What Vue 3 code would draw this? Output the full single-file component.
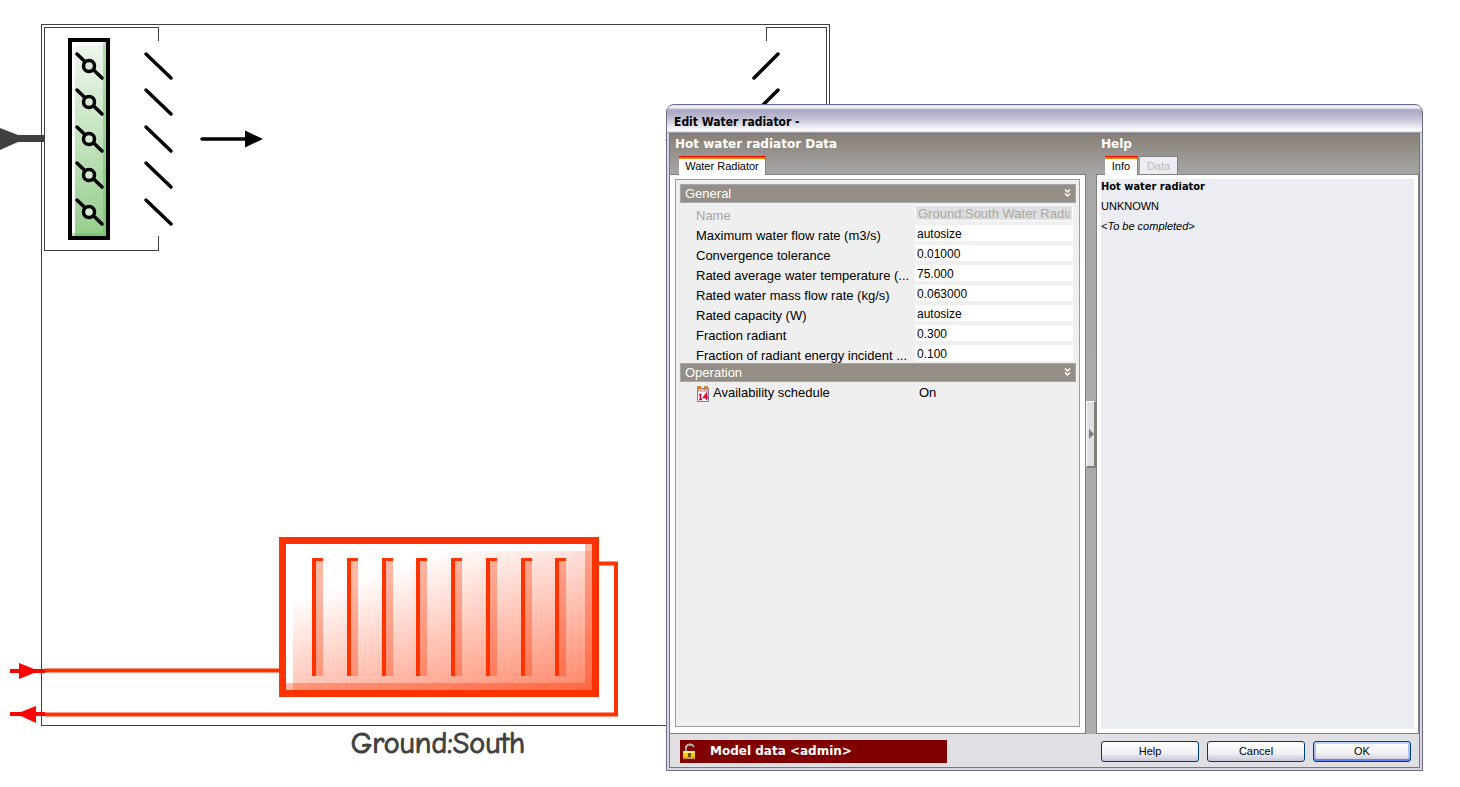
<script setup>
import { ref } from 'vue'

const centres = [66, 102, 139, 175, 212]
const fins = [312, 347, 382, 416, 451, 486, 521, 555]

const fields = ref([
  { id: 'name', label: 'Name', value: 'Ground:South Water Radiator', disabled: true },
  { id: 'flow', label: 'Maximum water flow rate (m3/s)', value: 'autosize' },
  { id: 'tolerance', label: 'Convergence tolerance', value: '0.01000' },
  { id: 'temperature', label: 'Rated average water temperature (...', value: '75.000' },
  { id: 'mass', label: 'Rated water mass flow rate (kg/s)', value: '0.063000' },
  { id: 'capacity', label: 'Rated capacity (W)', value: 'autosize' },
  { id: 'radiant', label: 'Fraction radiant', value: '0.300' },
  { id: 'incident', label: 'Fraction of radiant energy incident ...', value: '0.100' }
])
</script>

<template>
  <main class="workspace">
    <svg class="diagram" width="860" height="770" viewBox="0 0 860 770" role="img" aria-label="Zone diagram">
      <defs>
        <linearGradient id="green" gradientUnits="userSpaceOnUse" x1="75" y1="45" x2="105" y2="236">
          <stop offset="0" stop-color="#f0f7ef" />
          <stop offset="1" stop-color="#93ce8a" />
        </linearGradient>
        <linearGradient id="heat" gradientUnits="userSpaceOnUse" x1="293" y1="600" x2="350" y2="771">
          <stop offset="0" stop-color="#ff3300" stop-opacity="0" />
          <stop offset="1" stop-color="#ff3300" stop-opacity="0.6" />
        </linearGradient>
      </defs>
      <g fill="none" stroke="#404040" shape-rendering="crispEdges">
        <rect x="41.5" y="24.5" width="788" height="701" />
        <path d="M158.500 41V27.500H44.500V250.500H158.500V236M766.500 41V27.500H826.500V250" />
      </g>
      <path d="M0 128 18 135H45V142H18L0 150Z" fill="#404040" />

      <rect x="70" y="40" width="38" height="198" fill="#fff" stroke="#000" stroke-width="4" />
      <rect x="75" y="45" width="31" height="191" fill="url(#green)" />
      <path d="M103 42h3v191h-3zM72 233h34v3H72z" fill="#59b64e" fill-opacity="0.4" />
      <g fill="none" stroke="#000" stroke-width="3.500" stroke-linecap="round">
        <g v-for="y in centres" :key="y">
          <path :d="`M77 ${y - 12}L102 ${y + 12}`" />
          <circle cx="89" :cy="y" r="5.500" fill="#d5ebd2" />
          <path :d="`M146 ${y - 12}L171 ${y + 12}`" />
        </g>
        <path d="M778 54 754 78M778 90 754 114M202 139H246" />
      </g>
      <path d="M245 130.500 263 139 245 147.500Z" />
      <path d="M669 137 665 140 669 142Z" fill="#777" />

      <rect x="282.500" y="540.500" width="313" height="153" fill="#fff" stroke="#ff3300" stroke-width="7" />
      <path d="M293 551H592V690H293Z" fill="url(#heat)" />
      <path d="M585 544h7v146h-7zM286 683h306v7H286z" fill="#ff3300" fill-opacity="0.35" />
      <g v-for="x in fins" :key="x" fill="#ff3300">
        <rect :x="x + 4" y="561" width="7" height="115" fill-opacity="0.35" />
        <path :d="`M${x} 558h11v3h-7v115h-4z`" />
      </g>
      <path d="M45 670.500H280M599 563.500H616V714.500H45" fill="none" stroke="#ff3300" stroke-width="4" />
      <path d="M10 669H19V663L34 669H45V673H34L19 679V673H10ZM10 712H21L36 706V712H45V716H36V723L21 716H10Z" fill="#f00" />
      <text class="zone-name" x="438" y="753" text-anchor="middle">Ground:South</text>
    </svg>

    <section class="dialog" role="dialog" aria-labelledby="dialog-title">
      <h1 id="dialog-title">Edit Water radiator -</h1>
      <div class="body">
        <section class="pane data">
          <h2>Hot water radiator Data</h2>
          <div class="tabs"><button class="tab active" type="button">Water Radiator</button></div>
          <div class="sheet">
            <div class="properties">
              <button class="group" type="button">General
                <svg width="7" height="9" viewBox="0 0 7 9"><path d="M1 0.500 3.500 3 6 0.500M1 4.500 3.500 7 6 4.500" fill="none" stroke="#fff" stroke-width="1.500" /></svg>
              </button>
              <div v-for="f in fields" :key="f.id" class="row" :class="{ disabled: f.disabled }">
                <label :for="f.id">{{ f.label }}</label>
                <input :id="f.id" v-model="f.value" type="text" :disabled="f.disabled">
              </div>
              <button class="group" type="button">Operation
                <svg width="7" height="9" viewBox="0 0 7 9"><path d="M1 0.500 3.500 3 6 0.500M1 4.500 3.500 7 6 4.500" fill="none" stroke="#fff" stroke-width="1.500" /></svg>
              </button>
              <div class="row schedule">
                <svg width="14" height="17" viewBox="0 0 14 17" aria-hidden="true">
                  <path d="M1.500 3.500h11v13h-11z" fill="#fff" stroke="#7878b0" />
                  <path d="M2 4h10v3H2z" fill="#e9b3ae" />
                  <path d="M2 5V2h2l1 2M9 5V2h2l1 2" fill="none" stroke="#c98535" stroke-width="2" />
                  <path d="M3 9.500H4.500V14M3 14.500h3M10.500 15V8.500L7.500 12.500H12" fill="none" stroke="#e0002d" stroke-width="1.500" />
                </svg>
                <label for="availability">Availability schedule</label>
                <input id="availability" type="text" value="On">
              </div>
            </div>
          </div>
        </section>
        <div class="divider">
          <button type="button" aria-label="Collapse help">
            <svg width="5" height="10" viewBox="0 0 5 10"><path d="M0 0 5 5 0 10Z" fill="#808080" /></svg>
          </button>
        </div>
        <section class="pane help">
          <h2>Help</h2>
          <div class="tabs">
            <button class="tab active" type="button">Info</button>
            <button class="tab" type="button" disabled>Data</button>
          </div>
          <div class="sheet">
            <div class="info">
              <h3>Hot water radiator</h3>
              <p>UNKNOWN</p>
              <p><em>&lt;To be completed&gt;</em></p>
            </div>
          </div>
        </section>
      </div>
      <footer>
        <div class="status">
          <svg width="14" height="17" viewBox="0 0 14 17" aria-hidden="true">
            <path d="M4 9V4l2-2h4l2 2" fill="none" stroke="#999" stroke-width="2" />
            <path d="M4 5V3l2-2h4l2 2" fill="none" stroke="#ddd" stroke-dasharray="2 1" />
            <path d="M1 8h12v8H1z" fill="#f5c518" />
            <path d="M1 8h12v2H1z" fill="#ffef70" />
            <path d="M1 14h12v2H1z" fill="#d99b10" />
            <path d="M6 10h3v4H6z" fill="#6b5212" />
          </svg>
          <span>Model data &lt;admin&gt;</span>
        </div>
        <div class="actions">
          <button type="button">Help</button>
          <button type="button">Cancel</button>
          <button type="button" class="default">OK</button>
        </div>
      </footer>
    </section>
  </main>
</template>

<style>
body { margin: 0; background: #fff; }
</style>

<style scoped>
* { box-sizing: border-box; }
.workspace {
  position: relative;
  min-height: 100vh;
  overflow: hidden;
  color: #000;
  font-family: "Liberation Sans", Arial, sans-serif;
  font-size: 13px;
}
.diagram { display: block; }
.zone-name {
  fill: #404040;
  stroke: #404040;
  stroke-width: 1px;
  font-family: "Comic Sans MS", "Comic Neue", Lato, sans-serif;
  font-size: 30px;
}
button, input { margin: 0; padding: 0; border: 0; border-radius: 0; font: inherit; color: inherit; }
h1, h2, h3, p { margin: 0; }
.dialog {
  position: absolute;
  top: 104px;
  right: 37px;
  bottom: 16px;
  left: 666px;
  display: flex;
  flex-direction: column;
  padding: 0 2px 2px;
  border: 1px solid #6b6b88;
  border-radius: 8px 8px 0 0;
  background: #d8d8e4;
  overflow: hidden;
}
h1 {
  height: 28px;
  margin: 0 -2px;
  padding-left: 7px;
  background: linear-gradient(#d0d0e0 0, #fff 2px, #a8a6c4 5px, #c0bfd2 13px, #fff 26px, #8886a0 28px);
  font: bold 12px/34px "DejaVu Sans Condensed", "DejaVu Sans", sans-serif;
}
.body {
  flex: 1;
  display: flex;
  min-height: 0;
  border: 1px solid #76748c;
  border-bottom: 0;
  background: linear-gradient(#888078 0, #a8a8a8 42px, #adadad 100%);
}
.pane { display: flex; flex-direction: column; min-width: 0; }
.data { flex: 416 1 0; }
.help { flex: 323 1 0; }
h2 {
  height: 22px;
  padding-left: 5px;
  color: #fff;
  font: bold 12px/20px "DejaVu Sans", sans-serif;
}
.tabs { display: flex; gap: 2px; height: 18px; padding-left: 9px; }
.tab {
  height: 18px;
  padding: 0 6px;
  border-top: 1px solid #808080;
  border-right: 1px solid #808080;
  background: #ecedf2;
  font-size: 11px;
  line-height: 19px;
}
.tab.active {
  position: relative;
  height: 19px;
  border-top: 1px solid #f00;
  background: linear-gradient(#ff8000 2px, #fff 2px);
}
.tab:disabled { color: #bbb; }
.data .tab { width: 87px; }
.help .tab.active { width: 33px; }
.help .tab:disabled { width: 38px; }
.sheet {
  flex: 1;
  display: flex;
  padding: 4px;
  border: 1px solid #808080;
  background: #fff;
}
.data .sheet { border-left: 0; padding: 4px 5px 6px; }
.properties {
  flex: 1;
  padding: 4px 3px 4px 4px;
  border: 1px solid #9c9ca0;
  background: #efefef;
}
.group {
  display: flex;
  align-items: center;
  justify-content: space-between;
  width: 100%;
  height: 19px;
  padding: 0 4px;
  border: 1px solid #a8a8ac;
  background: #948e86;
  color: #fff;
  text-align: left;
}
.row { display: flex; align-items: flex-start; height: 20px; padding: 2px 3px 0 16px; }
.row label { flex: 1; line-height: 22px; white-space: nowrap; }
.row input {
  width: 158px;
  height: 16px;
  padding: 1px 2px 0;
  background: #fff;
  font-size: 12px;
  line-height: 15px;
}
.row.disabled { color: #a5a5a5; }
.row.disabled input { padding-top: 0; border: 1px solid #fff; background: #e0dfe3; font-size: 13px; color: #aca899; }
.schedule svg { margin-top: 1px; margin-right: 3px; }
.schedule label { line-height: 18px; }
.schedule input { width: 154px; padding: 1px 0 0; background: transparent; font-size: 13px; }
.divider { display: flex; align-items: center; width: 10px; }
.divider button {
  display: flex;
  align-items: center;
  justify-content: flex-end;
  width: 10px;
  height: 67px;
  border: 1px solid #fff;
  border-right: 2px solid #808074;
  border-bottom: 2px solid #808074;
  background: #e0dfe3;
}
.info { flex: 1; background: #ecedf2; font-size: 11px; }
.info h3 { font: bold 11px/16px "DejaVu Sans Condensed", "DejaVu Sans", sans-serif; margin-bottom: 3px; }
.info p { line-height: 16px; margin-bottom: 4px; }
footer {
  display: flex;
  align-items: center;
  justify-content: space-between;
  height: 34px;
  padding: 1px 8px 0 10px;
  border: 1px solid #76748c;
  border-top: 0;
  background: #e0dfe3;
}
.status {
  display: flex;
  align-items: center;
  gap: 14px;
  width: 267px;
  height: 23px;
  padding-left: 2px;
  background: #800000;
  color: #fff;
  font: bold 12px/23px "DejaVu Sans", sans-serif;
}
.actions { display: flex; gap: 8px; }
.actions button {
  width: 98px;
  height: 21px;
  border: 1px solid #003c74;
  border-radius: 3px;
  background: linear-gradient(#fff, #f0f0f5 60%, #c6c5d7);
  font-size: 11px;
}
.actions .default { box-shadow: inset 0 2px #bcd4f6, inset 0 -2px #6982ee, inset 2px 0 #a9c2f0, inset -2px 0 #a9c2f0; }
</style>
